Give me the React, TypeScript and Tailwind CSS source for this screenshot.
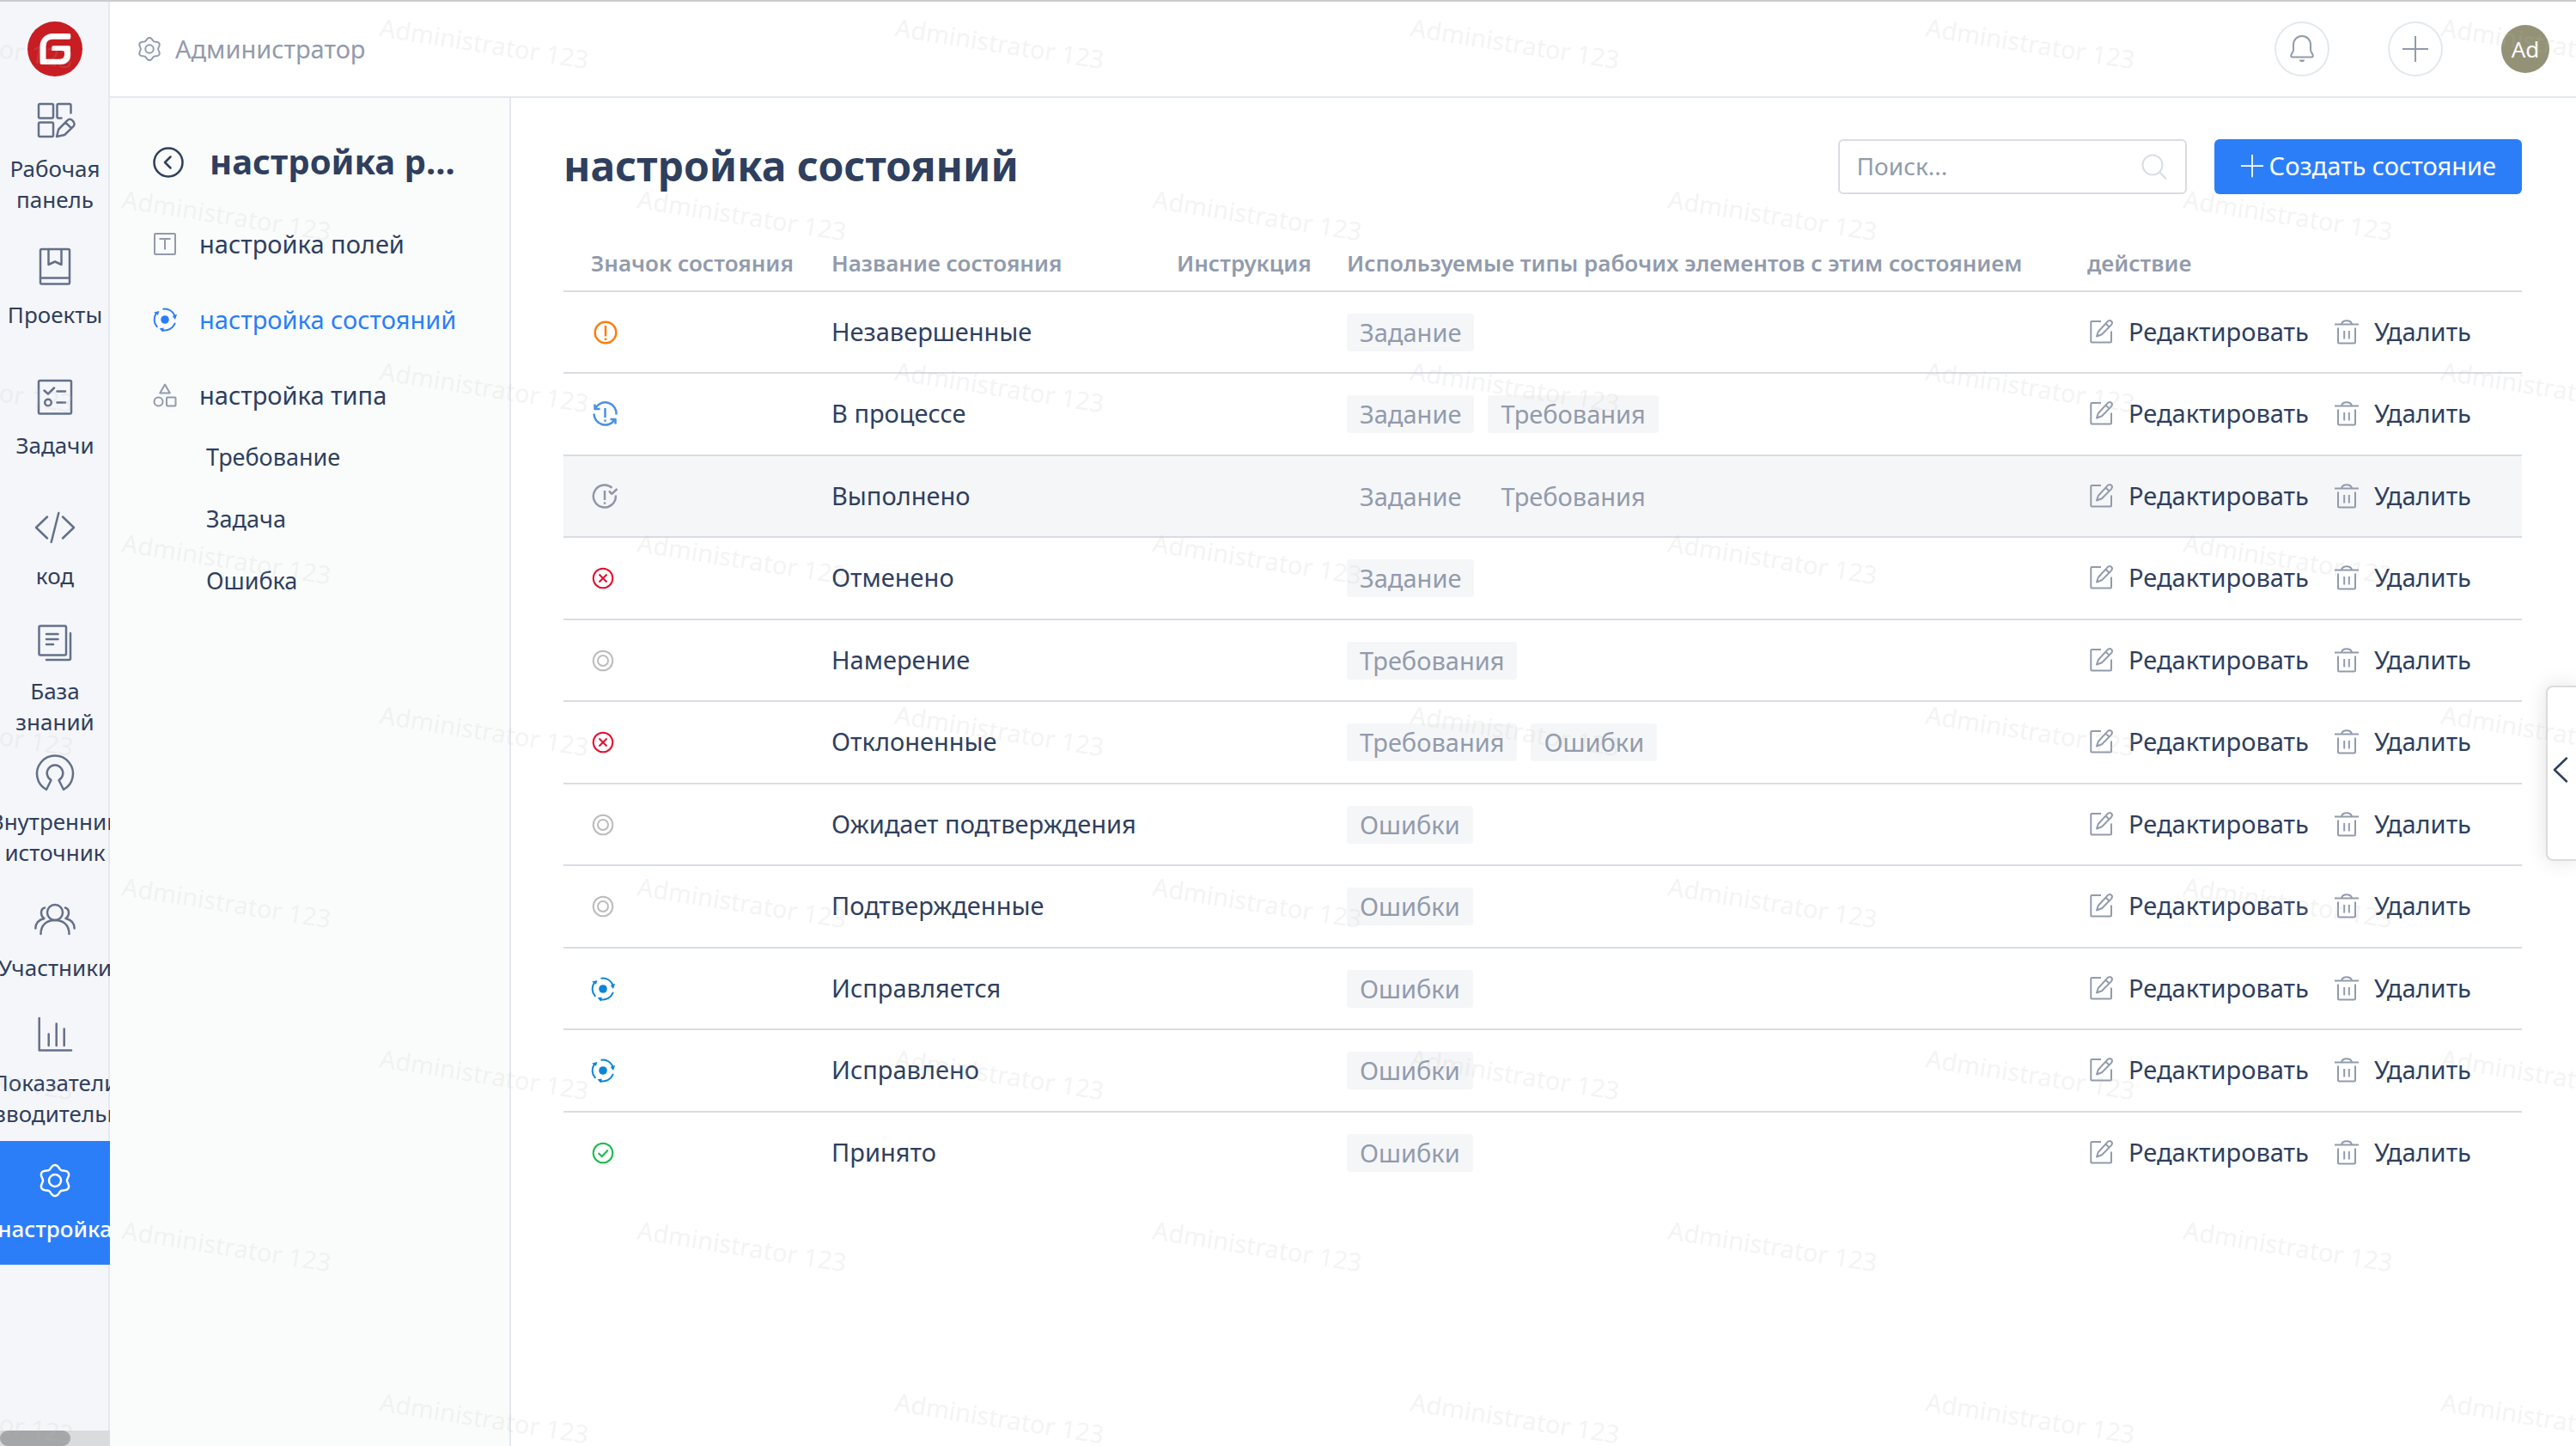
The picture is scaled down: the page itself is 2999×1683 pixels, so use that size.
import React from "react";

type IconProps = { className?: string };

/* ---------- geometry helpers ---------- */

function gearPath(c: number, r: number, amp: number) {
  let d = "";
  for (let i = 0; i < 120; i++) {
    const t = (i / 120) * Math.PI * 2;
    const rr = r - amp * Math.cos(6 * t);
    d += `${i ? "L" : "M"}${(c + rr * Math.cos(t)).toFixed(2)} ${(c + rr * Math.sin(t)).toFixed(2)}`;
  }
  return d + "Z";
}

function point(deg: number, r: number) {
  const a = (deg * Math.PI) / 180;
  return `${(14 + r * Math.sin(a)).toFixed(2)} ${(14 - r * Math.cos(a)).toFixed(2)}`;
}

/* ---------- icons ---------- */

function RailSvg({ children }: { children: React.ReactNode }) {
  return (
    <svg
      viewBox="0 0 44 44"
      className="size-11 shrink-0 overflow-visible"
      fill="none"
      stroke="currentColor"
      strokeWidth="2.5"
      strokeLinecap="round"
      strokeLinejoin="round"
      aria-hidden="true"
    >
      {children}
    </svg>
  );
}

const DashboardIcon = () => (
  <RailSvg>
    <rect x="3" y="3" width="17" height="16.5" rx="1.5" />
    <path d="M40.5 13.5V4.500Q40.500 3 39 3H26Q24.500 3 24.500 4.500V18Q24.500 19.500 26 19.500H29.500" />
    <rect x="3" y="24.500" width="17" height="16.500" rx="1.500" />
    <path d="M24 41L26.200 32.500L36.200 22.300C38 20.600 40.500 20.500 42.300 22.200C45 24.500 45.200 27.200 43.400 29.200L33.200 39Z M34.300 24.600L41 31.200" />
  </RailSvg>
);
const ProjectsIcon = () => (
  <RailSvg>
    <rect x="5" y="2" width="34" height="40.500" rx="1.500" />
    <path d="M5 35.500H39M14.500 2V20L22 16.500L29.500 20V2" />
  </RailSvg>
);
const TasksIcon = () => (
  <RailSvg>
    <rect x="3" y="3" width="38" height="38.500" rx="1.500" />
    <path d="M9.500 14.500L14 18.500L21 11.500M24.500 15.500H34M24.500 28.500H34" />
    <circle cx="14" cy="28.500" r="3.800" />
  </RailSvg>
);
const CodeIcon = () => (
  <RailSvg>
    <path d="M13 9.500L0 22L13 34.500M31 9.500L44 22L31 34.500M26.300 5L17.700 39" />
  </RailSvg>
);
const KnowledgeIcon = () => (
  <RailSvg>
    <rect x="3.500" y="2.500" width="31.500" height="34" rx="1.500" />
    <path d="M12 12H25.500M12 18H25.500M12 24H20M40 11V40.500Q40 42 38.500 42H12" />
  </RailSvg>
);
const SourceIcon = () => (
  <RailSvg>
    <path d="M12 41L17.500 30A9.300 9.300 0 1 1 26.500 30L32 41A21 21 0 1 0 12 41Z" />
  </RailSvg>
);
const MembersIcon = () => (
  <RailSvg>
    <circle cx="22" cy="14" r="9" />
    <path d="M5.500 39C5.500 28 13 23 22 23S38.500 28 38.500 39" />
    <path d="M10 8.500C5 10 4.500 17.500 9.500 21C3 22.500 -.5 26.500 -.7 32.500" />
    <path d="M34 8.500C39 10 39.500 17.500 34.500 21C41 22.500 44.500 26.500 44.700 32.500" />
  </RailSvg>
);
const ChartIcon = () => (
  <RailSvg>
    <path d="M3.700 3V40.500H41M14.700 21.500V35M23.700 9.500V35M32.700 15.500V35" />
  </RailSvg>
);
const RailGearIcon = () => (
  <RailSvg>
    <path d={gearPath(22, 16, 2)} />
    <circle cx="22" cy="22" r="7" />
  </RailSvg>
);

const Logo = () => (
  <svg viewBox="0 0 64 64" className="size-16" role="img" aria-label="Gitee">
    <circle cx="32" cy="32" r="32" fill="#c71d23" />
    <path
      fill="#fff"
      d="M48.500 14H29C21 14 14.500 20.700 14.500 28.700V48Q14.500 50 16.500 50H39.500C45.500 50 50 45.500 50 40V30Q50 28.300 48.300 28.300H30Q28.300 28.300 28.300 30V34H41Q43 34 43 36V38Q43 43.500 38 43.700H21.500V29Q21.500 20.800 29.500 20.800H48.500Q50.300 20.800 50.300 19V16Q50.300 14 48.500 14Z"
    />
  </svg>
);

const HeaderGearIcon = () => (
  <svg viewBox="0 0 44 44" className="size-8" fill="none" stroke="currentColor" strokeWidth="2.700" strokeLinejoin="round" aria-hidden="true">
    <path d={gearPath(22, 16, 2)} />
    <circle cx="22" cy="22" r="6.500" />
  </svg>
);

const BackIcon = () => (
  <svg viewBox="0 0 36 36" className="size-9" fill="none" stroke="currentColor" strokeWidth="2.500" strokeLinecap="round" strokeLinejoin="round" aria-hidden="true">
    <circle cx="18" cy="18" r="16.500" />
    <path d="M20.500 11.500L14 18L20.500 24.500" />
  </svg>
);

const FieldIcon = () => (
  <svg viewBox="0 0 28 28" className="size-7" fill="none" stroke="#929bac" strokeWidth="2" strokeLinejoin="round" aria-hidden="true">
    <rect x="2" y="2" width="24" height="24" rx="1" />
    <path d="M7.500 8H20.500M14 8V20.500" />
  </svg>
);

const CycleIcon = ({ className }: IconProps) => (
  <svg viewBox="0 0 28 28" className={className} fill="none" stroke="currentColor" strokeWidth="2" strokeLinecap="round" aria-hidden="true">
    <circle cx="14" cy="14" r="4.800" fill="currentColor" stroke="none" />
    {[
      [228, 305],
      [352, 68],
      [112, 190],
    ].map(([from, to]) => (
      <g key={from}>
        <path d={`M${point(from, 12.4)}A12.400 12.400 0 0 1 ${point(to, 12.4)}`} />
        <path
          d={`M${point(to - 2, 9.6)}L${point(to - 2, 15.4)}L${point(to + 22, 12)}Z`}
          fill="currentColor"
          stroke="none"
        />
      </g>
    ))}
  </svg>
);

const ShapesIcon = () => (
  <svg viewBox="0 0 28 28" className="size-7" fill="none" stroke="#929bac" strokeWidth="2" strokeLinejoin="round" aria-hidden="true">
    <path d="M14 1.500L19.800 11.500H8.200Z" />
    <circle cx="6.500" cy="21.500" r="5" />
    <rect x="16" y="16.500" width="10.500" height="10" rx="1" />
  </svg>
);

const BellIcon = () => (
  <svg viewBox="0 0 64 64" className="size-full" fill="none" stroke="currentColor" strokeWidth="2" strokeLinejoin="round" aria-hidden="true">
    <path d="M32 17c-6 0-10 4.500-10 10v6c0 3-2.800 4.500-2.800 6.800c0 1 .8 1.700 1.800 1.700h22c1 0 1.800-.7 1.800-1.700c0-2.300-2.800-3.800-2.800-6.800v-6c0-5.500-4-10-10-10z" />
    <path d="M29 44.500h6a3 2.600 0 0 1-6 0z" fill="currentColor" stroke="none" />
  </svg>
);

const PlusIcon = ({ className }: IconProps) => (
  <svg viewBox="0 0 32 32" className={className} fill="none" stroke="currentColor" strokeWidth="2" aria-hidden="true">
    <path d="M16 1V31M1 16H31" />
  </svg>
);

const SearchIcon = () => (
  <svg viewBox="0 0 32 32" className="size-8" fill="none" stroke="#d9dde3" strokeWidth="2" strokeLinecap="round" aria-hidden="true">
    <circle cx="14" cy="14" r="11.500" />
    <path d="M22.500 22.500L29.500 30" />
  </svg>
);

const EditIcon = () => (
  <svg viewBox="0 0 32 32" className="size-8" fill="none" stroke="#929bac" strokeWidth="2" strokeLinejoin="round" aria-hidden="true">
    <path d="M16 4H5.300Q4.300 4 4.300 5V27.500Q4.300 28.500 5.300 28.500H27Q28 28.500 28 27.500V15.500" />
    <path d="M11 21.500L12.800 16L23.500 4.300C25 2.800 26.800 2.700 28 3.800C29.300 5 29.200 6.600 28 8.100L17 19.300ZM21.500 6.800L25.500 10.500" />
  </svg>
);

const TrashIcon = () => (
  <svg viewBox="0 0 32 32" className="size-8" fill="none" stroke="#929bac" strokeWidth="2" strokeLinejoin="round" aria-hidden="true">
    <path d="M2 7.500H30M10 7C11.500 2 20.500 2 22 7" />
    <path d="M6 11.500V28Q6 29.500 7.500 29.500H24.500Q26 29.500 26 28V11.500M13.200 15V24.500M18.800 15V24.500" />
  </svg>
);

/* ---------- state icons ---------- */

type StateKind = "open" | "progress" | "done" | "cancel" | "idle" | "cycle" | "accepted";

function StateIcon({ kind }: { kind: StateKind }) {
  switch (kind) {
    case "open":
      return (
        <svg viewBox="0 0 32 32" className="size-8" fill="none" stroke="#fd7d0c" strokeWidth="2.500" aria-hidden="true">
          <circle cx="17" cy="16" r="12.300" />
          <path d="M17 8V20.500M17 22.500V25" />
        </svg>
      );
    case "progress":
      return (
        <svg viewBox="0 0 32 32" className="size-8" fill="none" stroke="#4a90e2" strokeWidth="2.500" strokeLinejoin="round" aria-hidden="true">
          <path d="M5.500 8.500A13 13 0 0 1 29.500 16.500M27.500 22.500A13 13 0 0 1 3.500 15.500" />
          <path d="M4.500 4.500V10H10.500M28.500 27.500V22H22.500" />
          <path d="M16.500 9V20M16.500 22.500V24.800" />
        </svg>
      );
    case "done":
      return (
        <svg viewBox="0 0 32 32" className="size-8" fill="none" stroke="#9096a8" strokeWidth="2.500" strokeLinejoin="round" aria-hidden="true">
          <path d="M24.500 5.800A13 13 0 1 0 28.800 14.500" />
          <path d="M21 9.500L24.300 12.800L30.500 7M16 9V20M16 22.500V24.800" />
        </svg>
      );
    case "cancel":
      return (
        <svg viewBox="0 0 28 28" className="size-7" fill="none" stroke="#e60d2e" strokeWidth="2" aria-hidden="true">
          <circle cx="14" cy="14" r="11.300" />
          <path d="M9.500 9.500L18.500 18.500M18.500 9.500L9.500 18.500" />
        </svg>
      );
    case "idle":
      return (
        <svg viewBox="0 0 28 28" className="size-7" fill="none" stroke="#bcbcbc" strokeWidth="2" aria-hidden="true">
          <circle cx="14" cy="14" r="11.300" />
          <circle cx="14" cy="14" r="6" />
        </svg>
      );
    case "cycle":
      return <CycleIcon className="size-7 text-[#0b85d8]" />;
    case "accepted":
      return (
        <svg viewBox="0 0 28 28" className="size-7" fill="none" stroke="#14bb4a" strokeWidth="2" aria-hidden="true">
          <circle cx="14" cy="14" r="11.300" />
          <path d="M8.500 14L12.800 18L19.800 10.500" />
        </svg>
      );
  }
}

/* ---------- data ---------- */

const railItems: { lines: string[]; icon: React.ReactNode; active?: boolean }[] = [
  { lines: ["Рабочая", "панель"], icon: <DashboardIcon /> },
  { lines: ["Проекты"], icon: <ProjectsIcon /> },
  { lines: ["Задачи"], icon: <TasksIcon /> },
  { lines: ["код"], icon: <CodeIcon /> },
  { lines: ["База", "знаний"], icon: <KnowledgeIcon /> },
  { lines: ["Внутренний", "источник"], icon: <SourceIcon /> },
  { lines: ["Участники"], icon: <MembersIcon /> },
  { lines: ["Показатели", "производительности"], icon: <ChartIcon /> },
  { lines: ["настройка"], icon: <RailGearIcon />, active: true },
];

const menuItems = [
  { label: "настройка полей", icon: <FieldIcon />, active: false },
  { label: "настройка состояний", icon: <CycleIcon className="size-7" />, active: true },
  { label: "настройка типа", icon: <ShapesIcon />, active: false },
];

const typeItems = ["Требование", "Задача", "Ошибка"];

const states: { kind: StateKind; name: string; types: string[]; hovered?: boolean }[] = [
  { kind: "open", name: "Незавершенные", types: ["Задание"] },
  { kind: "progress", name: "В процессе", types: ["Задание", "Требования"] },
  { kind: "done", name: "Выполнено", types: ["Задание", "Требования"], hovered: true },
  { kind: "cancel", name: "Отменено", types: ["Задание"] },
  { kind: "idle", name: "Намерение", types: ["Требования"] },
  { kind: "cancel", name: "Отклоненные", types: ["Требования", "Ошибки"] },
  { kind: "idle", name: "Ожидает подтверждения", types: ["Ошибки"] },
  { kind: "idle", name: "Подтвержденные", types: ["Ошибки"] },
  { kind: "cycle", name: "Исправляется", types: ["Ошибки"] },
  { kind: "cycle", name: "Исправлено", types: ["Ошибки"] },
  { kind: "accepted", name: "Принято", types: ["Ошибки"] },
];

/* ---------- page parts ---------- */

function Rail() {
  return (
    <nav className="relative flex w-32 shrink-0 flex-col overflow-hidden bg-[#f5f6f9]">
      <div className="absolute inset-y-0 right-0 w-0.5 bg-[#e3eaf0]" />
      <a href="#home" className="flex h-[110px] justify-center pt-[23px]">
        <Logo />
      </a>
      <div className="relative flex flex-col gap-2">
        {railItems.map((item) => (
          <a
            key={item.lines[0]}
            href={`#${item.lines[0]}`}
            className={
              item.active
                ? "flex h-36 flex-col items-center justify-center gap-4 bg-[#2c7ef8] font-medium text-white"
                : "flex h-36 flex-col items-center justify-center gap-4 text-[#2f3f5e]"
            }
          >
            <span className={item.active ? "text-white" : "text-[#64708a]"}>{item.icon}</span>
            <span className="flex flex-col items-center text-[26px] leading-9 whitespace-nowrap">
              {item.lines.map((line) => (
                <span key={line}>{line}</span>
              ))}
            </span>
          </a>
        ))}
      </div>
      <div className="absolute inset-x-0 bottom-0 h-[18px] bg-[#dadbdd]">
        <div className="h-full w-[82px] rounded-full bg-[#a5a6a8]" />
      </div>
    </nav>
  );
}

function TopBar() {
  return (
    <header className="flex h-28 shrink-0 items-center border-b-2 border-[#e3e9ed] bg-white pr-[31px] pl-[30px] text-[#929bac]">
      <a href="#admin" className="flex items-center gap-3.5 text-[29px]">
        <HeaderGearIcon />
        Администратор
      </a>
      <div className="ml-auto flex items-center gap-[68px]">
        <button aria-label="Уведомления" className="size-16 rounded-full shadow-[inset_0_0_0_2px_#e3e9ed]">
          <BellIcon />
        </button>
        <button aria-label="Добавить" className="flex size-16 items-center justify-center rounded-full shadow-[inset_0_0_0_2px_#e3e9ed]">
          <PlusIcon className="size-8" />
        </button>
        <button className="size-14 rounded-full bg-[#949276] text-[26px] text-white">Ad</button>
      </div>
    </header>
  );
}

function SideMenu() {
  return (
    <aside className="w-[467px] shrink-0 border-r-2 border-[#e3e9ed] bg-[#fafcfb] pt-10">
      <div className="flex h-[72px] items-center gap-[30px] pb-0.5 pl-[50px]">
        <button aria-label="Назад">
          <BackIcon />
        </button>
        <h2 className="pb-0.5 text-[40px] leading-none font-bold">настройка р...</h2>
      </div>
      <ul className="mt-[22px] flex flex-col gap-4 text-[29px]">
        {menuItems.map((item) => (
          <li key={item.label}>
            <a
              href={`#${item.label}`}
              className={
                item.active
                  ? "flex h-[72px] items-center gap-[26px] pl-[50px] text-[#2c7ef8]"
                  : "flex h-[72px] items-center gap-[26px] pl-[50px]"
              }
            >
              {item.icon}
              {item.label}
            </a>
          </li>
        ))}
      </ul>
      <ul className="text-[27px]">
        {typeItems.map((label) => (
          <li key={label}>
            <a href={`#${label}`} className="flex h-[72px] items-center pl-28">
              {label}
            </a>
          </li>
        ))}
      </ul>
    </aside>
  );
}

function StatesTable() {
  return (
    <table className="mt-12 w-full table-fixed border-collapse text-left">
      <colgroup>
        <col className="w-[280px]" />
        <col className="w-[402px]" />
        <col className="w-[198px]" />
        <col />
        <col className="w-[538px]" />
      </colgroup>
      <thead>
        <tr className="h-[65px] border-b-2 border-[#d9dde3] text-[26px] whitespace-nowrap text-[#929bac]">
          <th className="pl-8 font-semibold">Значок состояния</th>
          <th className="pl-8 font-semibold">Название состояния</th>
          <th className="pl-8 font-semibold">Инструкция</th>
          <th className="pl-8 font-semibold">Используемые типы рабочих элементов с этим состоянием</th>
          <th className="pl-8 font-semibold">действие</th>
        </tr>
      </thead>
      <tbody className="text-[29px]">
        {states.map((state) => (
          <tr
            key={state.name}
            className={
              state.hovered
                ? "h-24 border-b-2 border-[#d9dde3] bg-[#f5f6f8] odd:h-[95px]"
                : "h-24 border-b-2 border-[#d9dde3] last:border-b-0 odd:h-[95px]"
            }
          >
            <td className="pl-8">
              <StateIcon kind={state.kind} />
            </td>
            <td className="pb-0.5 pl-8 whitespace-nowrap">{state.name}</td>
            <td />
            <td className="pl-8">
              <div className="flex gap-4 text-[#929bac]">
                {state.types.map((type) => (
                  <span key={type} className="rounded bg-[#f5f6f8] px-[15px] leading-11">
                    {type}
                  </span>
                ))}
              </div>
            </td>
            <td className="pb-0.5 pl-8">
              <div className="flex gap-7">
                <button className="flex items-center gap-4">
                  <EditIcon />
                  Редактировать
                </button>
                <button className="flex items-center gap-4">
                  <TrashIcon />
                  Удалить
                </button>
              </div>
            </td>
          </tr>
        ))}
      </tbody>
    </table>
  );
}

function Watermark() {
  return (
    <div aria-hidden="true" className="pointer-events-none absolute inset-0 overflow-hidden select-none">
      {Array.from({ length: 9 }, (_, row) => (
        <div key={row} className={row % 2 ? "flex h-[200px] pl-[141px]" : "-ml-[159px] flex h-[200px]"}>
          {Array.from({ length: row % 2 ? 5 : 6 }, (_, col) => (
            <div key={col} className="w-[600px] shrink-0 pt-3.5">
              <span className="inline-block origin-[0_25px] rotate-9 text-[29px] leading-none whitespace-nowrap text-[#bebebe]/18">
                Administrator 123
              </span>
            </div>
          ))}
        </div>
      ))}
    </div>
  );
}

export default function App() {
  return (
    <div className="relative flex min-h-screen overflow-hidden border-t-2 border-[#cccccc] bg-white font-['Noto_Sans',sans-serif] text-[#2f3f5e]">
      <Rail />
      <div className="flex min-w-0 flex-1 flex-col">
        <TopBar />
        <div className="flex flex-1">
          <SideMenu />
          <main className="min-w-0 flex-1 pt-12 pr-[63px] pl-[61px]">
            <div className="flex h-16 items-center">
              <h1 className="pb-0.5 text-[48px] leading-none font-bold">настройка состояний</h1>
              <label className="ml-auto flex h-16 w-[406px] items-center rounded-md border-2 border-[#d9dde3] pr-5 pl-5">
                <input
                  type="text"
                  aria-label="Поиск"
                  placeholder="Поиск..."
                  className="min-w-0 flex-1 pb-0.5 text-[28px] outline-none placeholder:text-[#929bac]"
                />
                <SearchIcon />
              </label>
              <button className="ml-8 flex h-16 items-center gap-1.5 rounded-md bg-[#2c7ef8] px-[30px] pb-0.5 text-[29px] text-white">
                <PlusIcon className="size-7" />
                Создать состояние
              </button>
            </div>
            <StatesTable />
          </main>
        </div>
      </div>
      <button
        aria-label="Развернуть панель"
        className="absolute top-[796px] right-0 flex h-[204px] w-[35px] items-center rounded-l-lg border-2 border-r-0 border-[#dcdcdc] bg-white pb-2 pl-1.5 shadow-[0_0_24px_rgba(0,0,0,0.12)]"
      >
        <svg viewBox="0 0 18 30" className="h-[30px] w-[18px]" fill="none" stroke="currentColor" strokeWidth="2.500" strokeLinecap="round" strokeLinejoin="round" aria-hidden="true">
          <path d="M16 1.500L2 15L16 28.500" />
        </svg>
      </button>
      <Watermark />
    </div>
  );
}
